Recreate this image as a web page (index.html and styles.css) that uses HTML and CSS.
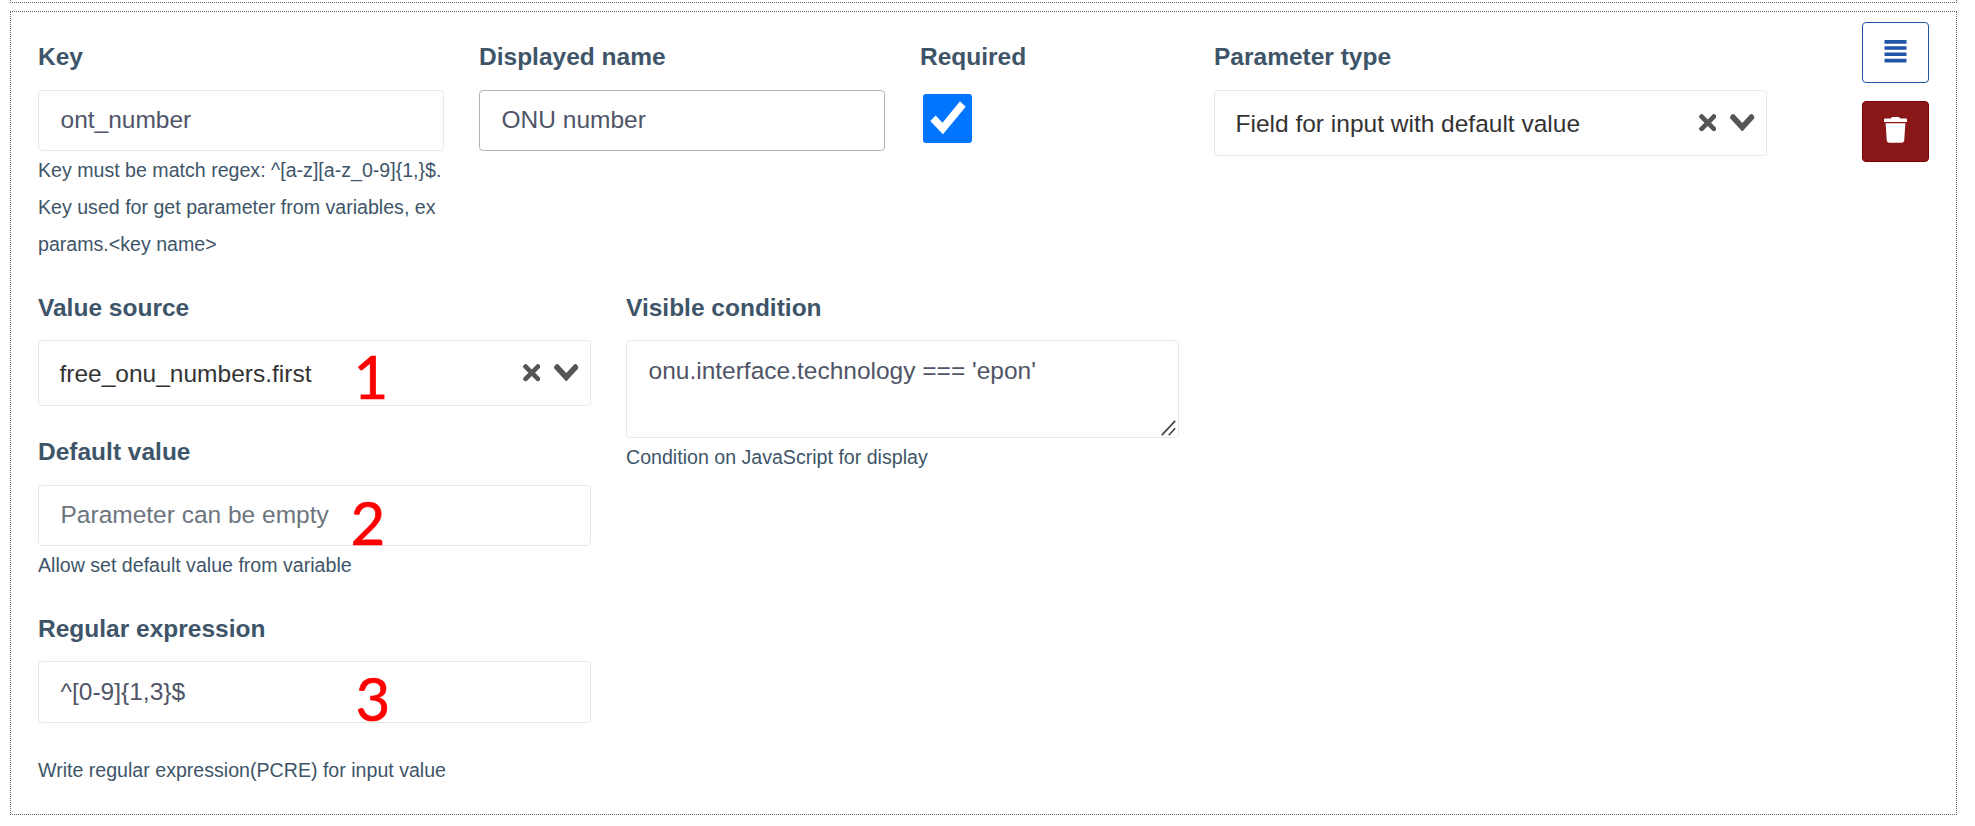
FILE: index.html
```html
<!DOCTYPE html>
<html lang="en">
<head>
<meta charset="utf-8">
<title>Parameters</title>
<link rel="stylesheet" href="styles.css">
</head>
<body>
<svg class="defs" width="0" height="0">
  <symbol id="clear" viewBox="0 0 10 10"><path d="M6.895455 5l2.842897-2.842898c.348864-.348863.348864-.914488 0-1.263636L9.106534.261648c-.348864-.348864-.914489-.348864-1.263636 0L5 3.104545 2.157102.261648c-.348863-.348864-.914488-.348864-1.263636 0L.261648.893466c-.348864.348864-.348864.914489 0 1.263636L3.104545 5 .261648 7.842898c-.348864.348863-.348864.914488 0 1.263636l.631818.631818c.348864.348864.914773.348864 1.263636 0L5 6.895455l2.842898 2.842897c.348863.348864.914772.348864 1.263636 0l.631818-.631818c.348864-.348864.348864-.914489 0-1.263636L6.895455 5z"/></symbol>
  <symbol id="open" viewBox="0 0 14 10"><path d="M9.211364 7.59931l4.48338-4.867229c.407008-.441854.407008-1.158247 0-1.60046l-.73712-.80023c-.407008-.441854-1.066904-.441854-1.474243 0L7 5.198617 2.51662.33139c-.407008-.441853-1.066904-.441853-1.474243 0l-.737121.80023c-.407008.441854-.407008 1.158248 0 1.600461l4.48338 4.867228L7 10l2.211364-2.40069z"/></symbol>
</svg>
<div class="card card-previous"></div>
<div class="card">
  <div class="fields">
    <div class="row">
      <div class="col col-3">
        <label class="label">Key</label>
        <div class="control">ont_number</div>
        <div class="hint">Key must be match regex: ^[a-z][a-z_0-9]{1,}$.<br>Key used for get parameter from variables, ex<br>params.&lt;key name&gt;</div>
      </div>
      <div class="col col-3">
        <label class="label">Displayed name</label>
        <div class="control control-active">ONU number</div>
      </div>
      <div class="col col-2">
        <label class="label">Required</label>
        <svg class="checkbox" width="49" height="49" viewBox="0 0 49 49"><rect width="49" height="49" rx="3" fill="#0075ff"/><path d="M7.2 27L12.7 21.5L19.5 28.8L37 7.3L42.7 12.8L20 40.2Z" fill="#fff"/></svg>
      </div>
      <div class="col col-4">
        <label class="label">Parameter type</label>
        <div class="select"><span class="value">Field for input with default value</span><svg class="clear"><use href="#clear"/></svg><svg class="open"><use href="#open"/></svg></div>
      </div>
    </div>
    <div class="row row-second">
      <div class="col col-4">
        <label class="label label-tight">Value source</label>
        <div class="select"><span class="value">free_onu_numbers.first</span><svg class="clear"><use href="#clear"/></svg><svg class="open"><use href="#open"/></svg><span class="mark mark-1">1</span></div>
        <label class="label label-default">Default value</label>
        <div class="control placeholder">Parameter can be empty<span class="mark mark-2">2</span></div>
        <div class="hint">Allow set default value from variable</div>
        <label class="label label-tight label-regex">Regular expression</label>
        <div class="control control-regex">^[0-9]{1,3}$<span class="mark mark-3">3</span></div>
        <div class="hint hint-spaced">Write regular expression(PCRE) for input value</div>
      </div>
      <div class="col col-4">
        <label class="label label-tight">Visible condition</label>
        <div class="control textarea">onu.interface.technology === 'epon'<svg class="grip" width="15" height="16" viewBox="0 0 15 16" fill="none" stroke="#444" stroke-width="1.7"><path d="M.8 15.2L14.2 .8M7.8 15.2L14.2 8.2"/></svg></div>
        <div class="hint">Condition on JavaScript for display</div>
      </div>
    </div>
  </div>
  <div class="actions">
    <div class="btn btn-move"><svg width="23" height="23" viewBox="0 0 23 23"><path d="M.5 0h22v3.8H.5zM.5 6.2h22v3.5H.5zM.5 12.4h22v3.5H.5zM.5 18.7h22v3.8H.5z" fill="#2056a8"/></svg></div>
    <div class="btn btn-delete"><svg width="23" height="26" viewBox="0 0 23 26"><path d="M0 5V2.7Q0 1.5 .8 1.5H6.5L7.7 .4Q8 0 8.5 0H14.5Q15 0 15.3 .4L16.5 1.5H22.2Q23 1.5 23 2.7V5ZM1.6 6.2H21.4L20.2 23.6Q20 25.7 18 25.7H5Q3 25.7 2.8 23.6Z" fill="#fff"/></svg></div>
  </div>
</div>
</body>
</html>
```
FILE: styles.css
```css
* { box-sizing: border-box; }
body {
  margin: 0;
  padding: 0 18px 0 10px;
  background: #fff;
  color: #3e5569;
  font: 24.5px/37px "Liberation Sans", Arial, sans-serif;
  overflow: hidden;
}
.defs { position: absolute; }
.card {
  display: flex;
  height: 804px;
  border: 1px dotted #666;
}
.card-previous { height: 3px; border-top: 0; margin-bottom: 8px; }
.fields { width: 1764px; margin-left: 9.5px; padding-top: 26px; }
.row { display: flex; }
.row-second { margin-top: 26px; }
.col { padding: 0 17.5px; }
.col-2 { width: 294px; }
.col-3 { width: 441px; }
.col-4 { width: 588px; }
.label { display: block; margin-bottom: 15px; font-weight: 700; }
.label-tight { margin-bottom: 14px; }
.label-default { margin-top: 27px; }
.label-regex { margin-top: 26px; }
.control, .select {
  position: relative;
  border: 1px solid #e6e8ea;
  border-radius: 4px;
  background: #fff;
}
.control {
  height: 61px;
  padding: 10px 21.5px;
  color: #4f5467;
  white-space: nowrap;
}
.control-active { border-color: #b5b5b5; }
.control-regex { height: 62px; padding-top: 11px; }
.placeholder { color: #6c757d; }
.textarea { height: 98px; padding-top: 11px; }
.grip { position: absolute; right: 2.5px; bottom: 1.5px; }
.select {
  display: flex;
  align-items: center;
  height: 66px;
  padding: 0 11.5px 0 20.5px;
  color: #333;
  fill: #555;
}
.value { flex: 1; }
.clear { width: 17.5px; height: 17.5px; margin-right: 14px; }
.open { width: 24.5px; height: 17.5px; }
.hint { margin-top: 1px; font-size: 19.6px; white-space: nowrap; }
.hint-spaced { margin-top: 29px; }
.checkbox { display: block; margin: 19px 0 0 3px; }
.col-2 .label { margin-bottom: 0; }
.mark {
  position: absolute;
  color: #f00;
  font: 60px/60px Lato, sans-serif;
  -webkit-text-stroke: .7px #f00;
}
.mark-1 { left: 314.5px; top: 4.5px; }
.mark-2 { left: 311.5px; top: 6px; }
.mark-3 { left: 316.5px; top: 5.5px; }
.actions {
  display: flex;
  flex-direction: column;
  gap: 18px;
  margin-left: 77.5px;
  padding-top: 10px;
}
.btn {
  display: flex;
  justify-content: center;
  width: 67px;
  height: 61px;
  border: 1px solid #2056a8;
  border-radius: 4px;
}
.btn-move { padding-top: 16.5px; }
.btn-delete { padding-top: 15px; background: #8b1818; border-color: #800000; }
```
